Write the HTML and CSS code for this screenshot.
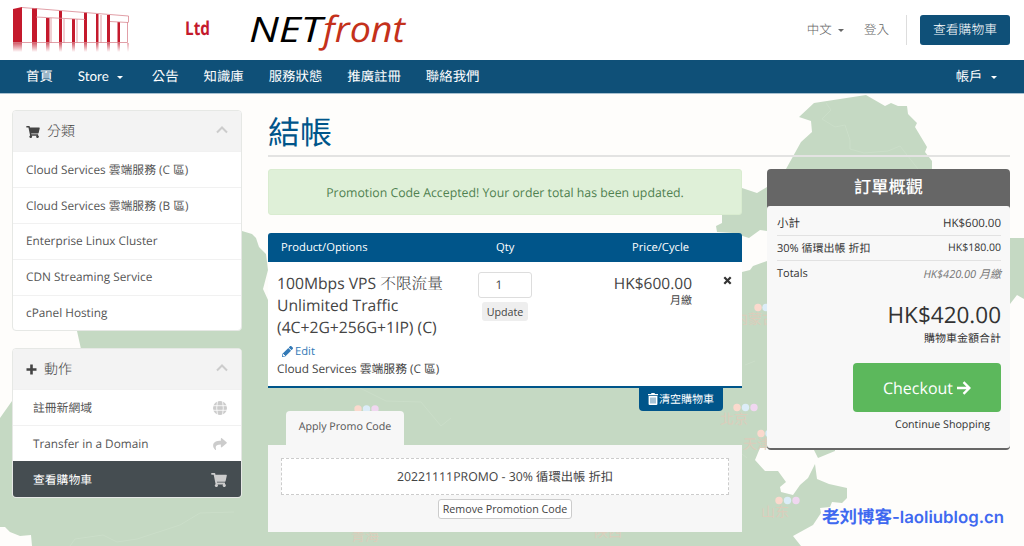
FILE: index.html
```html
<!DOCTYPE html>
<html lang="zh-Hant">
<head>
    <meta charset="UTF-8">
    <meta name="viewport" content="width=device-width, initial-scale=1.0">
    <title>結帳 - NETfront</title>
    <link rel="stylesheet" href="styles.css">
</head>
<body>
    <!-- shared icons -->
    <svg width="0" height="0" class="sprite">
        <symbol id="cart" viewBox="0 0 576 512"><path d="M528 301l47-208c4-15-8-29-23-29H159l-9-45C148 8 138 0 126 0H24C11 0 0 11 0 24v16c0 13 11 24 24 24h70l70 343a56 56 0 1 0 67 9h210a56 56 0 1 0 64-11l5-25c4-15-8-29-23-29H218l-7-32h294c11 0 21-8 23-18z"/></symbol>
        <symbol id="chevron" viewBox="0 0 12 8"><path d="M1 6.500l5-5 5 5" fill="none" stroke="currentColor" stroke-width="2"/></symbol>
    </svg>

    <svg class="map" width="1024" height="546" viewBox="0 0 1024 546">
        <path class="land" d="M767 187L757 193L742 188L722 200L722 223L716 226L717 232L733 233L749 238L760 230L767 231V261L753 266L750 270L742 272L700 290H380L268 300L263 289L268 270L266 254L259 247L256 238L252 234L242 231H200L77 331L81 349L12 401L0 418V527H5L10 532L20 536L31 535L32 546H801L793 536L813 525L821 513L820 508L830 507L832 502L842 503L847 498V488L829 484L817 479L815 464L808 478L800 485L793 495L781 492L780 487L786 482L778 471H765L755 460L760 448L812 446L818 458L835 451V420L1010 304L1017 295L1024 299V238H1000L932 170V161L925 152L927 147L915 127L917 123L908 114L907 106L898 106L891 103L885 106L866 95L814 103L799 117L811 121L812 132L801 142L786 169Z"/>
        <path class="border" d="M826 103l5 7l-9 9l13 8l10-2l5 15v9l14 4l24-2l12-5l18 23M70 546l5-7l28-4l14 7l20-3l43-14l20-12l34-1M324 390l8-4M360 388l26 13l35 1l20 24l10-8M745 365l10-4M737 450l10 8"/>
        <g class="pin-a"><circle cx="758" cy="307.500" r="3.700"/><circle cx="737" cy="407.500" r="3.700"/><circle cx="761" cy="433.500" r="3.700"/><circle cx="779" cy="500.500" r="3.700"/><circle cx="358" cy="409" r="3.700"/></g>
        <g class="pin-b"><circle cx="766" cy="307.500" r="3.700"/><circle cx="745.500" cy="407.500" r="3.700"/><circle cx="769" cy="433.500" r="3.700"/><circle cx="787.500" cy="500.500" r="3.700"/><circle cx="366.500" cy="409" r="3.700"/></g>
        <g class="pin-c"><circle cx="754" cy="407.500" r="3.700"/><circle cx="796" cy="500.500" r="3.700"/><circle cx="375" cy="409" r="3.700"/></g>
        <g class="place">
            <text x="734" y="324">内蒙古</text>
            <text x="720" y="424">北京</text>
            <text x="743" y="449">天津</text>
            <text x="761" y="517">山东</text>
            <text x="351" y="541">青海</text>
            <text x="594" y="537">陕西</text>
        </g>
    </svg>

    <header class="header">
        <svg class="logo" width="420" height="60" viewBox="0 0 420 60">
            <defs>
                <linearGradient id="fade" x1="0" y1="0" x2="0" y2="1">
                    <stop offset="0" stop-color="#c4192c" stop-opacity=".7"/>
                    <stop offset="1" stop-color="#c4192c" stop-opacity="0"/>
                </linearGradient>
            </defs>
            <g transform="translate(13 0)">
                <path fill="#c4192c" d="M0 9L9 7V43H0zM19 8h5v35h-5zM33 18h3.500v25H33zM46 11h3v32h-3zM59 19h3v24h-3zM71 12.500h3v30.500h-3zM83 14h2.500v29H83zM94 15h3v28h-3zM104.500 22h2.500v21h-2.500z"/>
                <path class="beam" d="M9 7.500L115.500 16V22.500M114.500 22V42.500H0M23 17L72 19.500M97 21.500L115 22.500M38 18V43M51 19V43M64 19V43M88 15V43"/>
                <path fill="url(#fade)" d="M0 43h9v9H0zM19 43h5v9h-5zM33 43h3.500v9H33zM46 43h3v9h-3zM59 43h3v9h-3zM71 43h3v9h-3zM83 43h2.500v9H83zM94 43h3v9h-3zM104.500 43h2.500v9h-2.500zM114.500 43h1v9h-1z"/>
            </g>
            <text class="logo-ltd" x="185" y="35" textLength="25" lengthAdjust="spacingAndGlyphs">Ltd</text>
            <text class="logo-net" x="249" y="42" textLength="73" lengthAdjust="spacingAndGlyphs">NET</text>
            <text class="logo-front" x="323" y="42" textLength="82" lengthAdjust="spacingAndGlyphs">front</text>
        </svg>
        <div class="top-nav">
            <a class="lang">中文 <i class="caret"></i></a>
            <a class="login">登入</a>
            <a class="btn-cart">查看購物車</a>
        </div>
    </header>

    <nav class="navbar">
        <a>首頁</a>
        <a class="store">Store <i class="caret"></i></a>
        <a>公告</a>
        <a>知識庫</a>
        <a>服務狀態</a>
        <a>推廣註冊</a>
        <a>聯絡我們</a>
        <a class="account">帳戶 <i class="caret"></i></a>
    </nav>

    <div class="page">
        <aside class="sidebar">
            <div class="panel">
                <div class="panel-heading">
                    <svg width="14" height="12"><use href="#cart"/></svg>
                    <span>分類</span>
                    <svg class="chevron" width="12" height="8"><use href="#chevron"/></svg>
                </div>
                <a class="item">Cloud Services 雲端服務 (C 區)</a>
                <a class="item">Cloud Services 雲端服務 (B 區)</a>
                <a class="item">Enterprise Linux Cluster</a>
                <a class="item">CDN Streaming Service</a>
                <a class="item">cPanel Hosting</a>
            </div>
            <div class="panel actions">
                <div class="panel-heading">
                    <svg width="11" height="11" viewBox="0 0 11 11"><path d="M4.200.5h2.600v3.700h3.700v2.600H6.800v3.700H4.200V6.800H.5V4.200h3.700z"/></svg>
                    <span>動作</span>
                    <svg class="chevron" width="12" height="8"><use href="#chevron"/></svg>
                </div>
                <a class="item">註冊新網域
                    <svg width="14" height="14" viewBox="0 0 14 14"><circle cx="7" cy="7" r="7"/><path d="M0 4.700h14M0 9.300h14M4.500 0Q2.900 7 4.500 14M9.500 0Q11.100 7 9.500 14" fill="none" stroke="#fff" stroke-width=".8"/></svg>
                </a>
                <a class="item">Transfer in a Domain
                    <svg width="14" height="12" viewBox="0 0 512 448"><path d="M503 160L327 8c-15-13-39-2-39 18v80C127 108 0 140 0 291c0 61 39 122 83 153 13 10 32-2 27-18C65 280 132 241 288 239v88c0 20 24 31 39 18l176-152c11-9 11-24 0-33z"/></svg>
                </a>
                <a class="item active">查看購物車
                    <svg width="16" height="14"><use href="#cart"/></svg>
                </a>
            </div>
        </aside>

        <main class="content">
            <h1>結帳</h1>
            <div class="columns">
                <section class="cart">
                    <div class="alert">Promotion Code Accepted! Your order total has been updated.</div>

                    <div class="cart-head">
                        <span>Product/Options</span>
                        <span class="qty-title">Qty</span>
                        <span class="price-title">Price/Cycle</span>
                    </div>
                    <div class="cart-item">
                        <div class="product">
                            <div class="name">100Mbps VPS <span class="serif">不限流量</span><br>Unlimited Traffic<br>(4C+2G+256G+1IP) (C)</div>
                            <a class="edit"><svg width="11" height="11" viewBox="0 0 512 512"><path d="M498 142l-47 47c-5 5-12 5-17 0L323 78c-5-5-5-12 0-17l47-47c19-19 49-19 68 0l60 60c19 19 19 49 0 68zM284 101L22 363 0 484c-3 16 11 30 27 27l121-21 263-262c5-5 5-12 0-17L301 101c-5-5-12-5-17 0zM88 424h48v36l-64 12-32-32 12-65h36z"/></svg>Edit</a>
                            <div class="group">Cloud Services 雲端服務 (C 區)</div>
                        </div>
                        <div class="qty">
                            <div class="qty-input">1</div>
                            <button class="update">Update</button>
                        </div>
                        <div class="price">
                            <div class="amount">HK$600.00</div>
                            <div class="cycle">月繳</div>
                        </div>
                        <svg class="remove" width="9" height="9" viewBox="0 0 9 9"><path d="M1.300 1.300l6.400 6.400M7.700 1.300L1.300 7.700" stroke="#333" stroke-width="2.200"/></svg>
                    </div>
                    <a class="empty"><svg width="10" height="12" viewBox="0 0 10 12"><path d="M0 1h3l.5-1h3L7 1h3v1.300H0zM.6 3h8.800v8a1 1 0 0 1-1 1H1.600a1 1 0 0 1-1-1z"/><path d="M3 4.500v6M5 4.500v6M7 4.500v6" stroke="#00558a" stroke-width=".7"/></svg>清空購物車</a>

                    <div class="tab">Apply Promo Code</div>
                    <div class="promo">
                        <div class="code">20221111PROMO - 30% 循環出帳 折扣</div>
                        <button class="remove-code">Remove Promotion Code</button>
                    </div>
                </section>

                <section class="summary">
                    <h2>訂單概觀</h2>
                    <div class="summary-body">
                        <div class="row subtotal"><span>小計</span><span>HK$600.00</span></div>
                        <div class="row"><span>30% 循環出帳 折扣</span><span class="discount">HK$180.00</span></div>
                        <div class="row totals"><span>Totals</span><em>HK$420.00 月繳</em></div>
                        <div class="total">HK$420.00</div>
                        <div class="total-label">購物車金額合計</div>
                        <a class="checkout">Checkout <svg width="14" height="14" viewBox="0 0 14 14"><path d="M0 7h12M6.500 1.200L12.300 7l-5.800 5.800" fill="none" stroke="#fff" stroke-width="2.400"/></svg></a>
                        <a class="continue">Continue Shopping</a>
                    </div>
                </section>
            </div>
        </main>
    </div>

    <div class="watermark"><span>老刘博客</span>-laoliublog.cn</div>
</body>
</html>
```
FILE: styles.css
```css
* {
    box-sizing: border-box;
}
body {
    margin: 0;
    height: 546px;
    overflow: hidden;
    background: #fefdfb;
    color: #444;
    font-family: "Open Sans", "Noto Sans CJK TC", sans-serif;
    font-size: 12px;
    text-rendering: geometricPrecision;
}
svg {
    fill: currentColor;
    flex: none;
}
.sprite {
    position: absolute;
}

/* map behind the page */
.map {
    position: absolute;
    top: 0;
    left: 0;
    z-index: -1;
}
.land {
    fill: #c5d9c3;
}
.border {
    fill: none;
    stroke: #cbdec9;
}
.pin-a {
    fill: #fbd9cd;
}
.pin-b {
    fill: #dcedf8;
}
.pin-c {
    fill: #f0d7f0;
}
.place {
    fill: #dccdbb;
    font: 14px/1 "Noto Sans CJK SC", sans-serif;
}

/* header */
.header {
    display: flex;
    justify-content: space-between;
    height: 60px;
    background: #fff;
}
.beam {
    fill: none;
    stroke: #d98791;
    stroke-width: .8;
}
.logo-ltd {
    fill: #c4192c;
    font: bold 19px "Open Sans", sans-serif;
}
.logo-net, .logo-front {
    fill: #000;
    font: italic 35px "Open Sans", sans-serif;
}
.logo-front {
    fill: #c4311b;
    font-size: 36px;
}
.top-nav {
    display: flex;
    align-items: center;
    padding-right: 14px;
    color: #666;
    font-size: 12.500px;
    font-weight: 300;
}
.top-nav a {
    margin-top: -3px;
}
.top-nav .login {
    margin-left: 20px;
    margin-right: 17px;
}
.top-nav .btn-cart {
    position: relative;
    height: 30px;
    margin: 0 0 0 14px;
    padding: 0 13px;
    border-radius: 3px;
    background: #0f5078;
    color: #fff;
    line-height: 29px;
    font-size: 12.800px;
}
.btn-cart::before {
    content: "";
    position: absolute;
    left: -14px;
    height: 30px;
    border-left: 1px solid #ddd;
}
.caret {
    display: inline-block;
    margin-left: 3px;
    border: 3.500px solid transparent;
    border-top-color: currentColor;
    border-bottom: 0;
    vertical-align: 2px;
}
.navbar {
    display: flex;
    gap: 25px;
    height: 34px;
    padding: 0 27px 0 26px;
    border-bottom: 1px solid #a9c1d0;
    background: #0f5078;
    color: #fff;
    line-height: 32px;
    font-size: 13.400px;
    white-space: nowrap;
}
.navbar .store {
    width: 49px;
    font-family: Lato, sans-serif;
}
.navbar .store .caret {
    margin-left: 5px;
}
.navbar .account {
    margin-left: auto;
}
.navbar .account .caret {
    margin-left: 5px;
}

.page {
    display: flex;
    gap: 26px;
    padding: 16px 14px 0 12px;
}
.sidebar {
    width: 230px;
}
.panel {
    margin-bottom: 17px;
    border: 1px solid #e6e8e5;
    border-radius: 4px;
    background: #fff;
    overflow: hidden;
}
.panel-heading {
    display: flex;
    align-items: center;
    height: 40px;
    padding: 1px 13px 0;
    background: #f3f3f3;
    color: #444;
    font-size: 14px;
    font-weight: 300;
    line-height: 18px;
}
.panel-heading span {
    margin-left: 7px;
}
.chevron {
    margin: -4px 0 0 auto;
    color: #ccc;
}
.item {
    display: flex;
    align-items: center;
    justify-content: space-between;
    height: 35.900px;
    padding: 0 14px 0 13px;
    border-top: 1px solid #f1f1f1;
    color: #555;
    font-size: 11.800px;
}
.actions .item {
    padding-left: 20px;
}
.item svg {
    color: #ccc;
}
.item.active {
    border-color: #454d51;
    background: #454d51;
    color: #fff;
}

.content {
    flex: 1;
}
h1 {
    height: 47px;
    margin: 0 0 12px;
    border-bottom: 2px solid #e3e3e2;
    color: #00558a;
    font-size: 32px;
    font-weight: 400;
    line-height: 45px;
}
.columns {
    display: flex;
    gap: 25px;
}
.cart {
    width: 474px;
}
.alert {
    height: 46px;
    margin-bottom: 18px;
    border: 1px solid #d9ecd0;
    border-radius: 3px;
    background: #dff0d8;
    color: #4f8050;
    font-size: 12.300px;
    line-height: 45px;
    text-align: center;
}
.cart-head {
    display: flex;
    height: 29px;
    padding-left: 13px;
    border-radius: 3px 3px 0 0;
    background: #00558a;
    color: #fff;
    font-size: 11.200px;
    line-height: 29px;
}
.cart-head span {
    width: 215px;
}
.cart-head .qty-title {
    width: 136px;
}
.cart-head .price-title {
    width: auto;
}
.cart-item {
    display: flex;
    height: 126px;
    padding: 10px 10px 0 9px;
    border-bottom: 2px solid #00558a;
    background: #fff;
}
.product {
    width: 201px;
}
.name {
    font-size: 15.700px;
    line-height: 22px;
    white-space: nowrap;
}
.serif {
    font-family: "Noto Serif CJK TC", "Noto Sans CJK TC", serif;
    font-weight: 300;
}
.edit {
    display: flex;
    align-items: center;
    gap: 2px;
    height: 20px;
    margin: 3px 0 0 5px;
    color: #337ab7;
    font-size: 11.200px;
}
.group {
    font-size: 11.800px;
    line-height: 17px;
}
.qty {
    width: 54px;
    text-align: center;
}
.qty-input {
    height: 26px;
    padding-right: 12px;
    border: 1px solid #ddd;
    border-radius: 3px;
    line-height: 24px;
}
.update {
    height: 19px;
    margin-top: 4px;
    padding: 0 5px;
    border: 0;
    border-radius: 3px;
    background: #eee;
    color: #444;
    font: 10.700px "Open Sans", sans-serif;
}
.price {
    width: 160px;
    text-align: right;
}
.amount {
    font-size: 15.500px;
    line-height: 22px;
}
.cycle {
    font-size: 11px;
    line-height: 14px;
}
.remove {
    margin: 4px 0 0 auto;
}
.empty {
    display: flex;
    align-items: center;
    gap: 1px;
    width: 84px;
    height: 23px;
    margin-left: 371px;
    padding: 0 0 1px 9px;
    border-radius: 0 0 4px 4px;
    background: #00558a;
    color: #fff;
    font-size: 11px;
    white-space: nowrap;
}
.tab {
    width: 118px;
    height: 34px;
    margin-left: 18px;
    border-radius: 4px 4px 0 0;
    background: #f7f7f7;
    color: #555;
    font-size: 10.700px;
    line-height: 33px;
    text-align: center;
}
.promo {
    height: 87px;
    padding: 13px;
    background: #f7f7f7;
    text-align: center;
}
.code {
    height: 37px;
    border: 1px dashed #ccc;
    background: #fff;
    font-size: 12.300px;
    line-height: 35px;
}
.remove-code {
    height: 20px;
    margin-top: 4px;
    padding: 0 4px;
    border: 1px solid #ccc;
    border-radius: 3px;
    background: #fff;
    color: #444;
    font: 10.700px "Open Sans", sans-serif;
}

.summary {
    width: 243px;
    height: 281px;
    border-bottom: 2px solid #666;
    border-radius: 4px;
    background: #666;
}
h2 {
    height: 37px;
    margin: 0;
    color: #fff;
    font-size: 17.200px;
    font-weight: 500;
    line-height: 37px;
    text-align: center;
}
.summary-body {
    display: flex;
    flex-direction: column;
    align-items: flex-end;
    height: 242px;
    padding: 5px 9px 0 10px;
    border-radius: 3px;
    background: #f8f8f8;
    color: #333;
}
.row {
    display: flex;
    align-items: center;
    justify-content: space-between;
    width: 100%;
    height: 25px;
    border-bottom: 1px solid #e2e2e2;
    font-size: 11px;
}
.row.subtotal {
    font-size: 11.500px;
}
.row .discount {
    font-size: 10.500px;
}
.row.totals {
    border: 0;
}
.row em {
    color: #777;
}
.total {
    margin-top: 11px;
    font-size: 22.500px;
    line-height: 36px;
}
.total-label {
    font-size: 11px;
    line-height: 12px;
}
.checkout {
    display: flex;
    align-items: center;
    justify-content: center;
    gap: 4px;
    width: 148px;
    height: 49px;
    margin-top: 18px;
    border-radius: 4px;
    background: #5cb85c;
    color: #fff;
    font-size: 16px;
}
.continue {
    margin: 6px 11px 0 0;
    font-size: 10.700px;
}
.watermark {
    position: absolute;
    left: 822px;
    top: 504px;
    color: #3f69f0;
    font: 600 16.800px/26px Inter, "Noto Sans CJK SC", sans-serif;
    white-space: nowrap;
}
.watermark span {
    font: bold 17.500px "Noto Sans CJK SC", sans-serif;
}
```
